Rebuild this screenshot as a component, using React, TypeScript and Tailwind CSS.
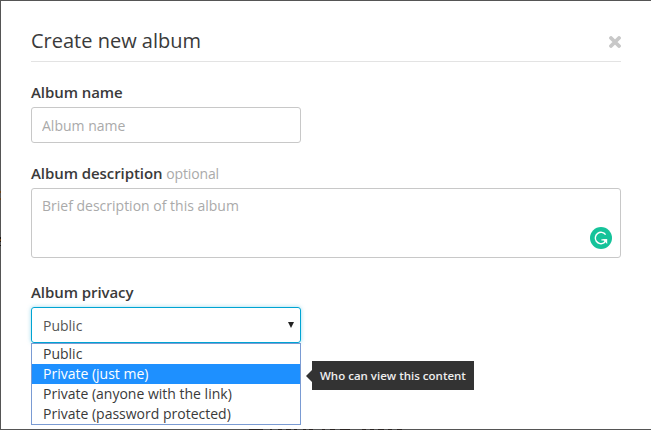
import { useState } from 'react';

const privacyOptions = [
  'Public',
  'Private (just me)',
  'Private (anyone with the link)',
  'Private (password protected)',
];

function GrammarBadge() {
  return (
    <svg className="absolute right-[9px] bottom-[9px]" width="22" height="22" viewBox="0 0 22 22">
      <circle cx="11" cy="11" r="11" fill="#15c39a" />
      <path
        d="M15.6 7.6A5.7 5.7 0 1 0 14.2 15.7L16 12.9H11.4"
        fill="none"
        stroke="#fff"
        strokeWidth="1.4"
      />
      <path d="M12.8 12.2H17.2V16.9Z" fill="#fff" />
    </svg>
  );
}

// Slivers of the dimmed page showing through along the dialog's edges
function BackdropEdges() {
  return (
    <svg className="pointer-events-none absolute inset-0" width="651" height="430" viewBox="0 0 651 430">
      <path
        d="M249 429.5H263M270 429.5H272M278 429.5H282M286 429.5H291M294 429.5H297M303 429.5H306M309 429.5H313M322 429.5H325M330 429.5H335M340 429.5H350M362 429.5H366M370 429.5H374M378 429.5H384M388 429.5H392M397 429.5H402"
        stroke="#2b2523"
        strokeWidth="1"
      />
      <path d="M0.5 191V193M0.5 198V200M0.5 239V241" stroke="#6b431c" strokeWidth="1" />
      <path d="M0.5 237V239M0.5 241V242M0.5 245V246" stroke="#1c1815" strokeWidth="1" />
    </svg>
  );
}

export default function App() {
  const [highlighted, setHighlighted] = useState(1);

  return (
    <div className="relative h-[430px] w-[651px] overflow-hidden">
      <div className="h-full border-t border-b border-l border-[#555] bg-white px-[30px] font-['Open_Sans',sans-serif] text-[15px] text-[#3a3a3a]">
        {/* Header */}
        <div className="flex h-[61px] w-[590px] items-center justify-between border-b border-[#e3e3e3] pt-[19px]">
          <h2 className="text-xl leading-[27px]">Create new album</h2>
          <button type="button" aria-label="Close">
            <svg className="relative top-px" width="12" height="12" viewBox="0 0 12 12">
              <path d="M2 2L10 10M10 2L2 10" stroke="#c8c8c8" strokeWidth="3.8" strokeLinecap="round" />
            </svg>
          </button>
        </div>

        {/* Name */}
        <div className="mt-5">
          <label htmlFor="name" className="block h-[25px] leading-5 font-semibold tracking-[-0.07px]">
            Album name
          </label>
          <input
            id="name"
            placeholder="Album name"
            className="block h-9 w-[270px] rounded-[3px] border border-[#c8c8c8] px-2.5 text-sm placeholder:text-[#aaa]"
          />
        </div>

        {/* Description */}
        <div className="mt-5">
          <label htmlFor="description" className="block h-[25px] leading-5 font-semibold tracking-[-0.07px]">
            Album description{' '}
            <span className="text-sm font-normal tracking-[-0.15px] text-[#aaa]">optional</span>
          </label>
          <div className="relative w-[590px]">
            <textarea
              id="description"
              placeholder="Brief description of this album"
              className="block h-[70px] w-full resize-none rounded-[3px] border border-[#c8c8c8] px-2.5 py-[7px] text-sm leading-5 placeholder:text-[#aaa]"
            />
            <GrammarBadge />
          </div>
        </div>

        {/* Privacy */}
        <div className="mt-6">
          <div className="h-[25px] leading-5 font-semibold tracking-[-0.07px]">Album privacy</div>
          <div className="flex items-start">
            <div className="w-[270px]">
              <div className="flex h-9 items-center justify-between rounded-[3px] border border-[#00a4d3] pr-1.5 pl-[11px] text-sm text-[#555] shadow-[0_0_4px_rgba(0,164,211,0.4)]">
                <span className="pt-0.5">Public</span>
                <svg width="6" height="6" viewBox="0 0 6 6">
                  <path d="M0 0H6L3 6Z" fill="#222" />
                </svg>
              </div>
              <ul className="relative border border-[#7a9bd3] bg-white text-sm leading-5">
                {privacyOptions.map((option, i) => (
                  <li
                    key={option}
                    onMouseEnter={() => setHighlighted(i)}
                    className={i === highlighted ? 'bg-[#1e90ff] pl-[11px] text-white' : 'pl-[11px]'}
                  >
                    {option}
                  </li>
                ))}
              </ul>
            </div>
            <div className="mt-[54px] ml-[5px] flex items-center">
              <svg width="6" height="12" viewBox="0 0 6 12">
                <path d="M6 0V12L0 6Z" fill="#333" />
              </svg>
              <div className="flex h-[29px] w-[162px] items-center bg-[#333] pl-2 text-[11.5px] font-semibold whitespace-nowrap text-[#eee]">
                Who can view this content
              </div>
            </div>
          </div>
        </div>
      </div>
      <BackdropEdges />
    </div>
  );
}
